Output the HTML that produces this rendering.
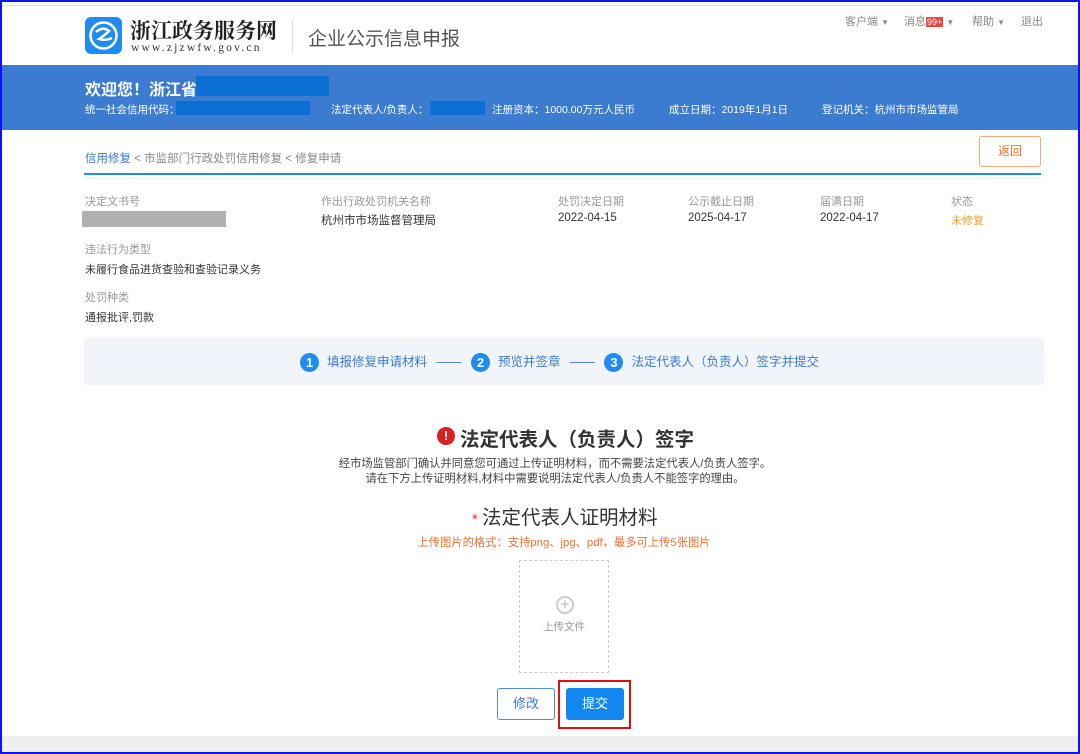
<!DOCTYPE html>
<html><head><meta charset="utf-8"><style>
*{margin:0;padding:0;box-sizing:border-box}
body{width:1080px;height:754px;overflow:hidden;background:#fff;font-family:"Liberation Sans","Noto Sans CJK SC",sans-serif;position:relative;color:#333}
.a{position:absolute;white-space:nowrap}
.frame{position:absolute;left:0;top:0;width:1080px;height:754px;border:2px solid #0a14f0;z-index:10;pointer-events:none}
.lbl{font-size:11px;color:#999}
.val{font-size:11.5px;color:#333}
.c{display:inline-block;width:19px;height:19px;border-radius:50%;background:#1e8cf0;color:#fff;font-weight:bold;font-size:13px;text-align:center;line-height:19px;vertical-align:middle;margin-right:8px}
</style></head><body>
<div class="frame"></div>
<div class="a" style="left:2px;top:5px;width:1076px;height:1px;background:#ddd"></div>
<div class="a" style="left:85px;top:17px;width:37px;height:37px;background:#1e8cf0;border-radius:6px">
<svg width="37" height="37" viewBox="0 0 37 37"><circle cx="18.5" cy="18.5" r="13" fill="none" stroke="#fff" stroke-width="2.5"/><path d="M11 15 Q18 9 24 14 Q20 18 14 22 Q20 24 27 21" fill="none" stroke="#fff" stroke-width="2.5"/></svg></div>
<div class="a" style="left:130px;top:15px;font-size:21px;font-weight:bold;color:#222;font-family:'Noto Serif CJK SC',serif">浙江政务服务网</div>
<div class="a" style="left:131px;top:42px;font-size:11.5px;color:#333;letter-spacing:2.2px;font-family:'Liberation Serif',serif">www.zjzwfw.gov.cn</div>
<div class="a" style="left:292px;top:20px;width:1px;height:33px;background:#ddd"></div>
<div class="a" style="left:308px;top:24px;font-size:19px;color:#555">企业公示信息申报</div>
<div class="a" style="left:845px;top:13px;font-size:11px;color:#888">客户端 <span style="font-size:8px">▼</span></div>
<div class="a" style="left:904px;top:13px;font-size:11px;color:#888">消息<span style="background:#e44;color:#fff;font-size:9px;padding:0 1px">99+</span> <span style="font-size:8px">▼</span></div>
<div class="a" style="left:972px;top:13px;font-size:11px;color:#888">帮助 <span style="font-size:8px">▼</span></div>
<div class="a" style="left:1021px;top:13px;font-size:11px;color:#888">退出</div>
<div class="a" style="left:2px;top:65px;width:1076px;height:65px;background:#3b7bd0"></div>
<div class="a" style="left:85px;top:76px;font-size:16px;font-weight:bold;color:#fff">欢迎您！浙江省</div>
<div class="a" style="left:196px;top:76px;width:133px;height:20px;background:#0c6fd4"></div>
<div class="a" style="left:85px;top:102px;font-size:10.5px;color:#fff">统一社会信用代码：</div>
<div class="a" style="left:176px;top:101px;width:134px;height:14px;background:#0c6fd4"></div>
<div class="a" style="left:331px;top:102px;font-size:10.5px;color:#fff">法定代表人/负责人：</div>
<div class="a" style="left:430px;top:101px;width:55px;height:14px;background:#0c6fd4"></div>
<div class="a" style="left:492px;top:102px;font-size:10.5px;color:#fff">注册资本：1000.00万元人民币</div>
<div class="a" style="left:669px;top:102px;font-size:10.5px;color:#fff">成立日期：2019年1月1日</div>
<div class="a" style="left:822px;top:102px;font-size:10.5px;color:#fff">登记机关：杭州市市场监管局</div>
<div class="a" style="left:85px;top:150px;font-size:11.5px;color:#888"><span style="color:#3b7bd0">信用修复</span> &lt; 市监部门行政处罚信用修复 &lt; 修复申请</div>
<div class="a" style="left:979px;top:136px;width:62px;height:31px;border:1px solid #f5a77a;border-radius:3px;color:#f07030;font-size:12px;text-align:center;line-height:29px">返回</div>
<div class="a" style="left:84px;top:173px;width:957px;height:2px;background:#1e8cf0"></div>
<div class="a" style="left:84px;top:178px;width:957px;height:1px;background:#e6eef8"></div>
<div class="a lbl" style="left:85px;top:193px">决定文书号</div>
<div class="a" style="left:82px;top:211px;width:144px;height:16px;background:#b0b0b0"></div>
<div class="a lbl" style="left:321px;top:193px">作出行政处罚机关名称</div>
<div class="a val" style="left:321px;top:212px">杭州市市场监督管理局</div>
<div class="a lbl" style="left:558px;top:193px">处罚决定日期</div>
<div class="a val" style="left:558px;top:212px">2022-04-15</div>
<div class="a lbl" style="left:688px;top:193px">公示截止日期</div>
<div class="a val" style="left:688px;top:212px">2025-04-17</div>
<div class="a lbl" style="left:820px;top:193px">届满日期</div>
<div class="a val" style="left:820px;top:212px">2022-04-17</div>
<div class="a lbl" style="left:951px;top:193px">状态</div>
<div class="a val" style="left:951px;top:212px;color:#f0a030;font-size:11px">未修复</div>
<div class="a lbl" style="left:85px;top:241px">违法行为类型</div>
<div class="a val" style="left:85px;top:261px;font-size:11px">未履行食品进货查验和查验记录义务</div>
<div class="a lbl" style="left:85px;top:289px">处罚种类</div>
<div class="a val" style="left:85px;top:309px;font-size:11px">通报批评,罚款</div>
<div class="a" style="left:84px;top:338px;width:960px;height:47px;background:#f1f5fa"></div>
<div class="a" style="left:300px;top:351px;font-size:12.5px;color:#3b7bd0"><span class="c">1</span>填报修复申请材料 <span style="margin:0 6px">——</span> <span class="c">2</span>预览并签章 <span style="margin:0 6px">——</span> <span class="c">3</span>法定代表人（负责人）签字并提交</div>
<div class="a" style="left:437px;top:427px;width:18px;height:18px;border-radius:50%;background:#d92020;color:#fff;font-weight:bold;font-size:13px;text-align:center;line-height:18px">!</div>
<div class="a" style="left:460px;top:423px;font-size:19.5px;font-weight:bold;color:#333">法定代表人（负责人）签字</div>
<div class="a" style="left:0;width:1110px;top:457px;text-align:center;font-size:11.3px;color:#444;line-height:15px">经市场监管部门确认并同意您可通过上传证明材料，而不需要法定代表人/负责人签字。<br>请在下方上传证明材料,材料中需要说明法定代表人/负责人不能签字的理由。</div>
<div class="a" style="left:472px;top:501px;font-size:19.5px;color:#333"><span style="color:#e33;font-size:15px">* </span>法定代表人证明材料</div>
<div class="a" style="left:0;width:1128px;top:534px;text-align:center;font-size:11.3px;color:#f07030">上传图片的格式：支持png、jpg、pdf，最多可上传5张图片</div>
<div class="a" style="left:519px;top:560px;width:90px;height:113px;border:1px dashed #ccc"></div>
<div class="a" style="left:556px;top:596px;width:18px;height:18px;border:2px solid #ccc;border-radius:50%;color:#ccc;font-size:15px;line-height:13px;text-align:center;font-weight:bold">+</div>
<div class="a" style="left:543px;top:619px;font-size:10.5px;color:#999">上传文件</div>
<div class="a" style="left:497px;top:688px;width:58px;height:32px;border:1px solid #4a90e2;border-radius:3px;color:#3b7bd0;font-size:13px;text-align:center;line-height:30px">修改</div>
<div class="a" style="left:558px;top:680px;width:73px;height:49px;border:2px solid #e01010"></div>
<div class="a" style="left:566px;top:688px;width:58px;height:32px;background:#1388f0;border-radius:3px;color:#fff;font-size:13px;text-align:center;line-height:32px">提交</div>
<div class="a" style="left:2px;top:736px;width:1076px;height:16px;background:#eee"></div>
</body></html>
